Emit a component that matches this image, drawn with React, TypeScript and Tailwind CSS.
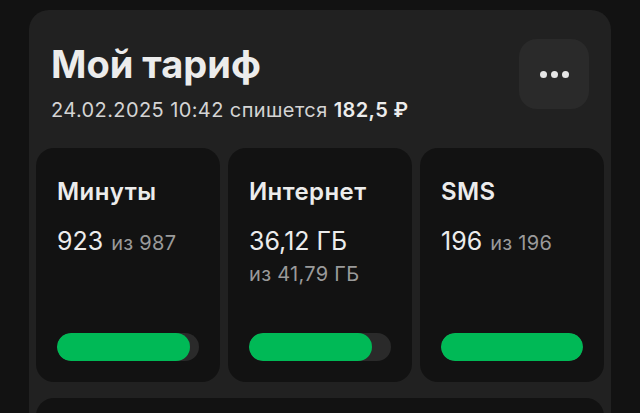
import React from 'react';

type Stat = {
  title: string;
  value: string;
  total: string;
  inline: boolean;
  percent: number;
};

const stats: Stat[] = [
  { title: 'Минуты', value: '923', total: 'из 987', inline: true, percent: 93.5 },
  { title: 'Интернет', value: '36,12 ГБ', total: 'из 41,79 ГБ', inline: false, percent: 86.4 },
  { title: 'SMS', value: '196', total: 'из 196', inline: true, percent: 100 },
];

function StatCard({ stat }: { stat: Stat }) {
  return (
    <div className="h-[234px] rounded-[18px] bg-[#121212] px-[21px] pt-[29px] pb-[21px] flex flex-col">
      <div className="text-[24px] leading-[30px] font-semibold tracking-[0.4px] text-[#ececec]">{stat.title}</div>
      {stat.inline ? (
        <div className="mt-[19px] leading-[30px] text-[#ececec]">
          <span className="text-[25px]">{stat.value}</span>
          <span className="ml-[2px] text-[20px] tracking-[0.3px] text-[#9a9a9a]"> {stat.total}</span>
        </div>
      ) : (
        <>
          <div className="mt-[19px] text-[25px] leading-[30px] text-[#ececec]">{stat.value}</div>
          <div className="mt-[6px] text-[20px] leading-[25px] tracking-[0.3px] text-[#9a9a9a]">{stat.total}</div>
        </>
      )}
      <div className="mt-auto h-[28px] rounded-full bg-[#2a2a2a] overflow-hidden">
        <div className="h-full rounded-full bg-[#00b956]" style={{ width: `${stat.percent}%` }} />
      </div>
    </div>
  );
}

export default function App() {
  return (
    <div
      className="w-[640px] h-[413px] overflow-hidden bg-[#121212] pt-[10px] px-[29px]"
      style={{ fontFamily: 'Inter, "Noto Sans", sans-serif' }}
    >
      <div className="rounded-[20px] bg-[#212121] px-[7px] pb-[8px]">
        <div className="flex items-start justify-between pl-[15px] pr-[15px] pt-[31px]">
          <div>
            <h1 className="text-[38px] leading-[46px] font-bold text-[#ececec]">Мой тариф</h1>
            <div className="mt-[11px] text-[20px] leading-[25px] tracking-[0.4px] text-[#d4d4d4]">
              24.02.2025 10:42 спишется <span className="font-semibold text-[#ececec]">182,5 ₽</span>
            </div>
          </div>
          <button className="mt-[-2px] w-[70px] h-[70px] rounded-[18px] bg-[#2a2a2a] flex items-center justify-center gap-[4px]">
            <span className="w-[7px] h-[7px] rounded-full bg-[#e6e6e6]" />
            <span className="w-[7px] h-[7px] rounded-full bg-[#e6e6e6]" />
            <span className="w-[7px] h-[7px] rounded-full bg-[#e6e6e6]" />
          </button>
        </div>
        <div className="mt-[25px] grid grid-cols-3 gap-[8px]">
          {stats.map((s) => (
            <StatCard key={s.title} stat={s} />
          ))}
        </div>
        <div className="mt-[16px] h-[80px] rounded-[18px] bg-[#121212]" />
      </div>
    </div>
  );
}
